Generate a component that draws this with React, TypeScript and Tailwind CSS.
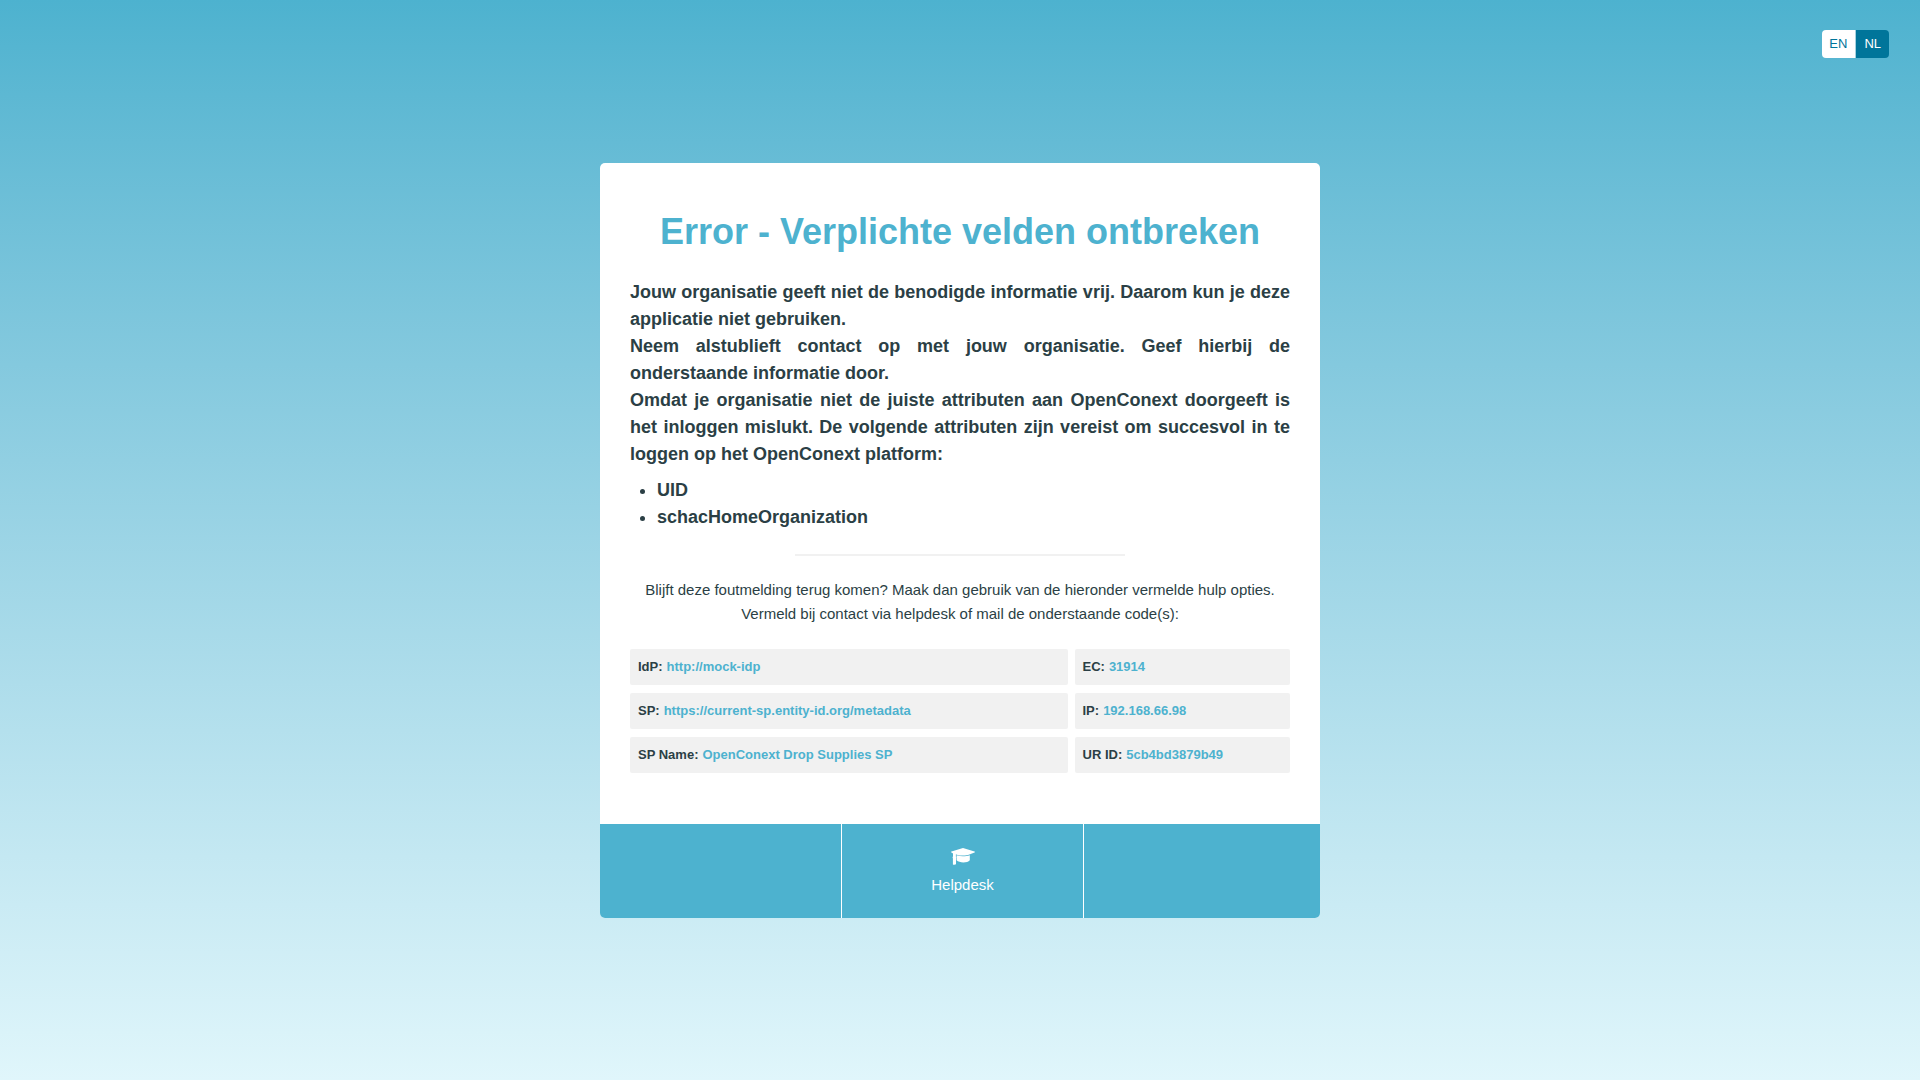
const details = [
  ["IdP:", "http://mock-idp"],
  ["EC:", "31914"],
  ["SP:", "https://current-sp.entity-id.org/metadata"],
  ["IP:", "192.168.66.98"],
  ["SP Name:", "OpenConext Drop Supplies SP"],
  ["UR ID:", "5cb4bd3879b49"],
];

function LanguageSwitch() {
  return (
    <nav aria-label="Taal" className="flex justify-end px-[31px] pt-[30px]">
      <div className="flex h-7 overflow-hidden rounded text-[13px] leading-7">
        <a href="#en" className="border-r border-[#a6d3e0] bg-white pr-2 pl-[7px] text-[#00759a]">
          EN
        </a>
        <a href="#nl" className="bg-[#00759a] px-2 text-white">
          NL
        </a>
      </div>
    </nav>
  );
}

function GraduationCap() {
  return (
    <svg viewBox="0 0 24 17" className="h-[17px] w-6" fill="currentColor" aria-hidden="true">
      <path d="M12 0 23.500 3.400c.7.2.7.9 0 1.200L18.400 6.600C15 7.900 9.500 7.900 6 6.700L4.900 6.300V8.800c.5.400.5 1 .1 1.400V16.300C4.200 16.900 2.800 16.900 1.900 16.500V10.200C1.500 9.700 1.500 9 2 8.600V5.500L.5 4.600C-.2 4.300-.2 3.600.5 3.400Z" />
      <path d="M5.600 7.300C9.500 8.700 15 8.600 18.800 7.200V12.200C16.500 15.200 8.500 15.200 5.600 12.300Z" />
    </svg>
  );
}

export default function App() {
  return (
    <div className="flex min-h-screen flex-col bg-linear-to-b from-[#4db2cf] to-[#e0f6fb] font-['Liberation_Sans',Arial,sans-serif] text-[#2b3f45]">
      <LanguageSwitch />
      <main className="mx-auto mt-[105px] mb-8 w-full max-w-[720px] overflow-hidden rounded-[5px] bg-white">
        <div className="px-[30px] pt-[45px] pb-[51px]">
          <h1 className="text-center text-4xl leading-[48px] font-bold text-[#4db2cf]">
            Error - Verplichte velden ontbreken
          </h1>
          <div className="mt-[23px] text-justify text-lg leading-[27px] font-bold">
            <p>
              Jouw organisatie geeft niet de benodigde informatie vrij. Daarom kun je deze
              applicatie niet gebruiken.
            </p>
            <p>
              Neem alstublieft contact op met jouw organisatie. Geef hierbij de onderstaande
              informatie door.
            </p>
            <p>
              Omdat je organisatie niet de juiste attributen aan OpenConext doorgeeft is het
              inloggen mislukt. De volgende attributen zijn vereist om succesvol in te loggen op
              het OpenConext platform:
            </p>
            <ul className="mt-[9px] list-disc pl-[27px]">
              <li>UID</li>
              <li>schacHomeOrganization</li>
            </ul>
          </div>
          <hr className="mx-auto mt-[23px] w-1/2 border-t-2 border-[#f1f1f1]" />
          <p className="mt-[22px] text-center text-[15px] leading-6">
            Blijft deze foutmelding terug komen? Maak dan gebruik van de hieronder vermelde hulp
            opties. Vermeld bij contact via helpdesk of mail de onderstaande code(s):
          </p>
          <dl className="mt-[23px] grid grid-cols-[67fr_33fr] gap-x-[7px] gap-y-2 text-[13px] leading-5 font-bold">
            {details.map(([label, value]) => (
              <div key={label} className="flex gap-1 rounded-xs bg-[#f1f1f1] p-2">
                <dt>{label}</dt>
                <dd className="text-[#4db2cf]">{value}</dd>
              </div>
            ))}
          </dl>
        </div>
        <footer className="grid h-[94px] grid-cols-[242fr_242fr_236fr] bg-[#4db2cf] text-[15px] leading-6 text-white">
          <div className="border-r border-white" />
          <a href="#helpdesk" className="flex flex-col items-center border-r border-white pt-6">
            <GraduationCap />
            <span className="mt-2">Helpdesk</span>
          </a>
          <div />
        </footer>
      </main>
    </div>
  );
}
